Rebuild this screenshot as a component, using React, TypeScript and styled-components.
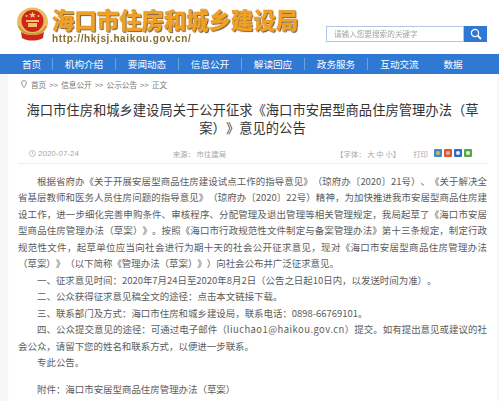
import React from 'react';
import styled, { createGlobalStyle } from 'styled-components';

const GlobalStyle = createGlobalStyle`
  html, body {
    margin: 0;
    padding: 0;
    background: #fff;
    font-family: "Noto Sans CJK SC", "Liberation Sans", sans-serif;
    text-spacing-trim: space-all;
  }
  * { box-sizing: border-box; }
`;

const Page = styled.div`
  width: 499px;
  height: 401px;
  overflow: hidden;
  display: flex;
  flex-direction: column;
  filter: blur(0.4px);
`;

const Header = styled.header`
  height: 54px;
  padding: 7px 12px 0 16px;
  display: flex;
  justify-content: space-between;
  flex-shrink: 0;
`;

const Brand = styled.div`
  display: flex;
  gap: 3px;
`;

const BrandText = styled.div`
  display: flex;
  flex-direction: column;
`;

const SiteName = styled.div`
  font-size: 22.4px;
  line-height: 25px;
  font-weight: 900;
  white-space: nowrap;
  color: #f0a228;
  -webkit-text-stroke: 0.5px #e2962a;
  text-shadow: 1px 1px 1px #5f5033;
`;

const SiteUrl = styled.div`
  margin-top: 1px;
  font-family: "Liberation Sans", sans-serif;
  font-size: 10px;
  line-height: 12px;
  font-weight: 700;
  letter-spacing: 0.62px;
  color: #8a6d2c;
`;

const SearchBox = styled.div`
  display: flex;
  align-self: flex-start;
  margin-top: 19px;
  width: 161px;
  height: 16px;
`;

const SearchInput = styled.div`
  flex: 1;
  border: 1px solid #b4c6e6;
  padding-left: 7px;
  font-size: 7.6px;
  line-height: 14px;
  color: #a3a3a3;
`;

const SearchButton = styled.div`
  width: 23px;
  background: #2f78d4;
  display: flex;
  align-items: center;
  justify-content: center;
`;

const Nav = styled.nav`
  height: 20px;
  flex-shrink: 0;
  background: #2f78d4;
  display: flex;
  align-items: center;
`;

const NavItem = styled.div<{ $first?: boolean; $plain?: boolean; $short?: boolean }>`
  width: ${(p) => (p.$first ? '53px' : p.$short ? '44px' : '63px')};
  padding-left: ${(p) => (p.$first ? '11px' : '0')};
  text-align: center;
  font-size: 9.6px;
  line-height: 12px;
  color: #fff;
  white-space: nowrap;
  border-right: ${(p) => (p.$plain ? 'none' : '1px solid #6ea3e4')};
`;

const Main = styled.main`
  flex: 1;
  padding: 0 12px 0 18px;
  background: linear-gradient(to right, #f6f6f6 0, #f6f6f6 7px, #fff 9px, #fff 497px, #f6f6f6 498px);
`;

const Crumbs = styled.div`
  height: 20px;
  display: flex;
  align-items: center;
  padding-left: 3px;
  gap: 4px;
  font-size: 7.6px;
  word-spacing: 1.6px;
  color: #777;
  white-space: nowrap;
`;

const Title = styled.h1`
  margin: 7px 0 0;
  padding: 0 5px;
  font-size: 13.3px;
  line-height: 18px;
  font-weight: 400;
  text-align: center;
  color: #333;
`;

const Meta = styled.div`
  margin-top: 6px;
  height: 21px;
  border-bottom: 1px solid #ececec;
  display: flex;
  align-items: center;
  font-size: 7.4px;
  color: #a8a8a8;
  white-space: nowrap;
  padding: 0 15px 0 11px;
`;

const MetaDate = styled.span`
  display: flex;
  align-items: center;
  gap: 2px;
  font-family: "Liberation Sans", sans-serif;
  font-size: 8px;
  width: 145px;
`;

const MetaSource = styled.span`
  width: 165px;
`;

const MetaPrint = styled.span`
  margin-left: 13px;
  width: 21px;
`;

const ShareIcons = styled.span`
  display: flex;
  gap: 2px;
`;

const Share = styled.span<{ $color: string; $mark: string }>`
  width: 8px;
  height: 8px;
  border-radius: 1px;
  background: ${(p) => p.$color};
  display: flex;
  align-items: center;
  justify-content: center;
  &::after {
    content: '';
    width: 4px;
    height: 4px;
    border-radius: 50%;
    background: ${(p) => p.$mark};
  }
`;

const Body = styled.div`
  margin-top: 9px;
  font-size: 9.45px;
  line-height: 16.45px;
  color: #5c5c5c;
`;

const Para = styled.p<{ $gapTop?: boolean }>`
  margin: ${(p) => (p.$gapTop ? '11px' : '0')} 0 0;
  text-indent: 19px;
  text-align: justify;
`;

const Email = styled.span`
  letter-spacing: 0.45px;
`;

const navItems = ['机构介绍', '要闻动态', '信息公开', '解读回应', '政务服务'];

const Emblem = () => (
  <svg width="33" height="34" viewBox="0 0 33 34">
    <ellipse cx="16.5" cy="15" rx="15.5" ry="14.5" fill="#e8bd62" />
    <circle cx="16.5" cy="14" r="11" fill="#d3241c" />
    <path d="M10 13h13v2H10z M12 16h9v4h-9z" fill="#eec36a" />
    <path d="M16.5 4.5l1 2.4 2.5.1-2 1.5.7 2.5-2.2-1.400-2.200 1.400.7-2.500-2-1.500 2.500-.1z" fill="#f1cc6e" />
    <circle cx="10.500" cy="9" r="1" fill="#f1cc6e" />
    <circle cx="22.500" cy="9" r="1" fill="#f1cc6e" />
    <path d="M5 25c3 2 6 3 11.500 3S25 27 28 25l-1 6c-3 2-7 2.500-10.500 2.500S9 33 6 31z" fill="#d3241c" />
    <path d="M3 19c2 5 6 8 13.500 8S28 24 30 19" fill="none" stroke="#c99a3f" strokeWidth="2" />
  </svg>
);

const App: React.FC = () => (
  <Page>
    <GlobalStyle />
    <Header>
      <Brand>
        <Emblem />
        <BrandText>
          <SiteName>海口市住房和城乡建设局</SiteName>
          <SiteUrl>http://hkjsj.haikou.gov.cn/</SiteUrl>
        </BrandText>
      </Brand>
      <SearchBox>
        <SearchInput>请输入您要搜索的关键字</SearchInput>
        <SearchButton>
          <svg width="12" height="12" viewBox="0 0 12 12" fill="none" stroke="#fff" strokeWidth="1.2">
            <circle cx="5" cy="5" r="3.6" />
            <path d="M7.700 7.700L11 11" strokeWidth="1.800" />
          </svg>
        </SearchButton>
      </SearchBox>
    </Header>
    <Nav>
      <NavItem $first>首页</NavItem>
      {navItems.map((item) => (
        <NavItem key={item}>{item}</NavItem>
      ))}
      <NavItem $plain>互动交流</NavItem>
      <NavItem $plain $short>数据</NavItem>
    </Nav>
    <Main>
      <Crumbs>
        <svg width="6" height="8" viewBox="0 0 6 8" fill="none" stroke="#999" strokeWidth="1">
          <path d="M3 7.500C1.500 5.500.6 4.300.6 3a2.400 2.400 0 0 1 4.800 0C5.400 4.300 4.500 5.500 3 7.500z" />
        </svg>
        <span>首页 &gt;&gt; 信息公开 &gt;&gt; 公示公告 &gt;&gt; 正文</span>
      </Crumbs>
      <Title>海口市住房和城乡建设局关于公开征求《海口市安居型商品住房管理办法（草案）》意见的公告</Title>
      <Meta>
        <MetaDate>
          <svg width="7" height="7" viewBox="0 0 7 7" fill="none" stroke="#aaa" strokeWidth="0.7">
            <circle cx="3.500" cy="3.500" r="3" />
            <path d="M3.500 1.600v2l1.300.7" />
          </svg>
          2020-07-24
        </MetaDate>
        <MetaSource>来源： 市住建局</MetaSource>
        <span>【字体： 大 中 小】</span>
        <MetaPrint>打印</MetaPrint>
        <ShareIcons>
          <Share $color="#3d8ccb" $mark="#e6b04a" />
          <Share $color="#d9573f" $mark="#eeb08a" />
          <Share $color="#2c6fc4" $mark="#e8f0fa" />
          <Share $color="#58a845" $mark="#e8f5e4" />
        </ShareIcons>
      </Meta>
      <Body>
        <Para>根据省府办《关于开展安居型商品住房建设试点工作的指导意见》（琼府办〔2020〕21号）、《关于解决全省基层教师和医务人员住房问题的指导意见》（琼府办〔2020〕22号）精神，为加快推进我市安居型商品住房建设工作，进一步细化完善申购条件、审核程序、分配管理及退出管理等相关管理规定，我局起草了《海口市安居型商品住房管理办法（草案）》。按照《海口市行政规范性文件制定与备案管理办法》第十三条规定，制定行政规范性文件，起草单位应当向社会进行为期十天的社会公开征求意见，现对《海口市安居型商品住房管理办法（草案）》（以下简称《管理办法（草案）》）向社会公布并广泛征求意见。</Para>
        <Para>一、征求意见时间：2020年7月24日至2020年8月2日（公告之日起10日内，以发送时间为准）。</Para>
        <Para>二、公众获得征求意见稿全文的途径：点击本文链接下载。</Para>
        <Para>三、联系部门及方式：海口市住房和城乡建设局，联系电话：0898-66769101。</Para>
        <Para>四、公众提交意见的途径：可通过电子邮件（<Email>liuchao1@haikou.gov.cn</Email>）提交。如有提出意见或建议的社会公众，请留下您的姓名和联系方式，以便进一步联系。</Para>
        <Para>专此公告。</Para>
        <Para $gapTop>附件：海口市安居型商品住房管理办法（草案）</Para>
      </Body>
    </Main>
  </Page>
);

export default App;
